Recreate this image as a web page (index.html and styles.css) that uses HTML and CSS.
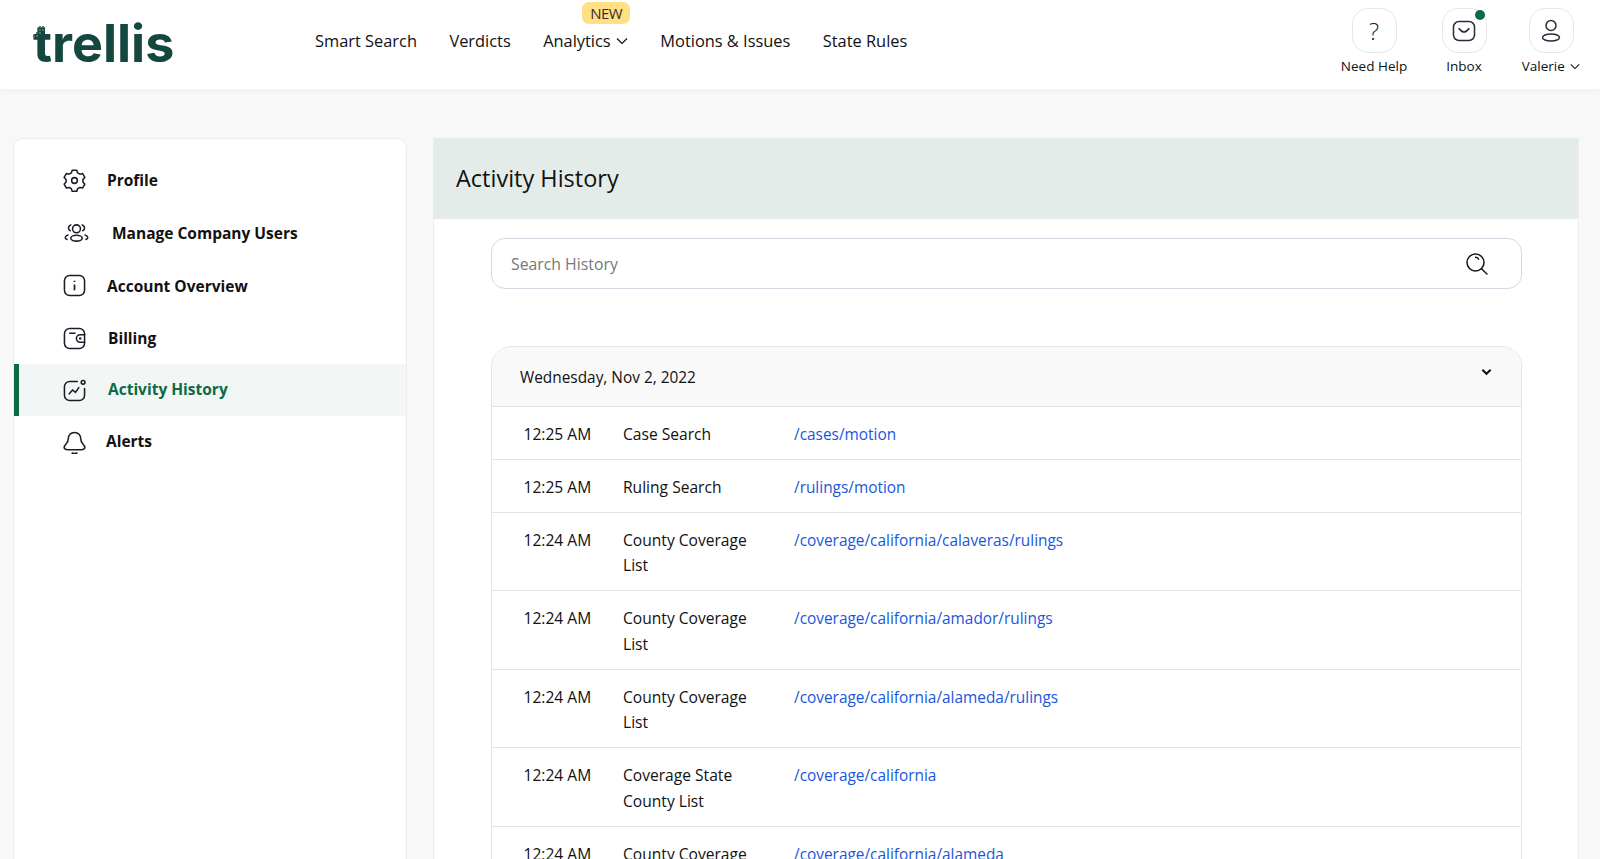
FILE: index.html
```html
<!DOCTYPE html>
<html lang="en">
<head>
<meta charset="utf-8">
<title>Activity History</title>
<link rel="stylesheet" href="styles.css">
</head>
<body>
<header class="topbar">
  <a class="logo"><svg class="logo-mark" viewBox="0 0 12 14" width="12" height="14"><g fill="#4d6f69"><rect x="6" y="0" width="2" height="2"/><rect x="9" y="0" width="2" height="2"/><rect x="6" y="3" width="2" height="2"/><rect x="9" y="3" width="2" height="2"/><rect x="3" y="6" width="2" height="2"/><rect x="6" y="6" width="2" height="2"/><rect x="0" y="9" width="2" height="2"/><rect x="3" y="9" width="2" height="2"/></g></svg>trellis</a>
  <nav class="mainnav">
    <a class="navlink">Smart Search</a>
    <a class="navlink">Verdicts</a>
    <a class="navlink has-badge"><span class="badge">NEW</span>Analytics <svg class="chev" viewBox="0 0 12 8" width="12" height="8"><path d="M1 1.500l5 5 5-5" fill="none" stroke="#111" stroke-width="1.200"/></svg></a>
    <a class="navlink">Motions &amp; Issues</a>
    <a class="navlink">State Rules</a>
  </nav>
  <div class="tools">
    <a class="tool tool-help">
      <span class="toolbox"><span class="qmark">?</span></span>
      <span class="toollabel">Need Help</span>
    </a>
    <a class="tool tool-inbox">
      <span class="toolbox"><i class="dot"></i><svg viewBox="0 0 24 24" width="24" height="24" fill="none" stroke="#2b2b3a" stroke-width="1.500"><rect x="1.500" y="2.500" width="21" height="19" rx="5.500"/><path d="M7 9.500c2 2.600 3.500 3.600 5 3.600s3-1 5-3.600" stroke-linecap="round"/></svg></span>
      <span class="toollabel">Inbox</span>
    </a>
    <a class="tool tool-user">
      <span class="toolbox"><svg viewBox="0 0 24 24" width="24" height="24" fill="none" stroke="#2b2b3a" stroke-width="1.500"><circle cx="12" cy="6.500" r="5"/><ellipse cx="12" cy="18.500" rx="8.500" ry="3.500"/></svg></span>
      <span class="toollabel">Valerie <svg class="chev chev-small" viewBox="0 0 12 8" width="10" height="7"><path d="M1 1.500l5 5 5-5" fill="none" stroke="#111" stroke-width="1.300"/></svg></span>
    </a>
  </div>
</header>

<div class="page">
  <aside class="sidebar">
    <a class="sideitem">
      <svg class="sideicon" viewBox="0 0 24 24" fill="none" stroke="#1c1c28" stroke-width="1.600" stroke-linejoin="round"><circle cx="12" cy="12" r="3"/><path d="M9.600 1.800h4.800l.9 2.800 2.300 1.300 2.900-.6 2.300 4-2 2.200v2.600l2 2.200-2.300 4-2.900-.6-2.300 1.300-.9 2.800H9.600l-.9-2.800-2.300-1.300-2.900.6-2.300-4 2-2.200v-2.600l-2-2.200 2.300-4 2.900.6 2.300-1.300z" transform="translate(0 -.5)"/></svg>
      <span class="sidetext t-profile">Profile</span>
    </a>
    <a class="sideitem">
      <svg class="sideicon icon-users" viewBox="0 0 24 24" fill="none" stroke="#1c1c28" stroke-width="1.500" stroke-linecap="round"><circle cx="12" cy="8.500" r="3.800"/><ellipse cx="12" cy="17.500" rx="5.500" ry="2.800"/><path d="M6.500 4.700a3 3 0 0 0-.5 5.600M17.500 4.700a3 3 0 0 1 .5 5.600M3.800 14.500c-1.600.6-2.600 1.500-2.600 2.300 0 .8.600 1.400 1.700 1.900M20.200 14.500c1.600.6 2.600 1.500 2.600 2.300 0 .8-.6 1.400-1.700 1.900"/></svg>
      <span class="sidetext t-users">Manage Company Users</span>
    </a>
    <a class="sideitem">
      <svg class="sideicon" viewBox="0 0 24 24" fill="none" stroke="#1c1c28" stroke-width="1.600"><rect x="1.500" y="1.500" width="21" height="21" rx="5.500"/><path d="M12 11v6" stroke-width="1.800"/><path d="M12 7v1.400" stroke-width="1.800"/></svg>
      <span class="sidetext t-account">Account Overview</span>
    </a>
    <a class="sideitem">
      <svg class="sideicon" viewBox="0 0 24 24" fill="none" stroke="#1c1c28" stroke-width="1.600" stroke-linecap="round"><path d="M22.500 8V7a5.500 5.500 0 0 0-5.500-5.500H7A5.500 5.500 0 0 0 1.500 7v10A5.500 5.500 0 0 0 7 22.500h10a5.500 5.500 0 0 0 5.500-5.500v-1"/><path d="M22.500 8h-4.500a4 4 0 0 0 0 8h4.500z"/><path d="M7 6.500h5.500"/><circle cx="18" cy="12" r=".6"/></svg>
      <span class="sidetext t-billing">Billing</span>
    </a>
    <a class="sideitem is-active">
      <svg class="sideicon" viewBox="0 0 24 24" fill="none" stroke="#1c1c28" stroke-width="1.600" stroke-linecap="round"><path d="M15 2.500H7A5.500 5.500 0 0 0 1.500 8v9A5.500 5.500 0 0 0 7 22.500h10a5.500 5.500 0 0 0 5.500-5.500v-7"/><circle cx="21" cy="3.500" r="2"/><path d="M6.500 15.500l3.500-4 3 2.500 3.500-5"/></svg>
      <span class="sidetext t-activity">Activity History</span>
    </a>
    <a class="sideitem">
      <svg class="sideicon" viewBox="0 0 24 24" fill="none" stroke="#1c1c28" stroke-width="1.600" stroke-linecap="round"><path d="M12 1.500c-4 0-6.500 3-6.500 6.500 0 2.500-.7 3.800-2.300 5.500-1.200 1.300-2 2.300-2 3.500 0 1.600 1.800 2.500 3.800 2.500h14c2 0 3.800-.9 3.800-2.500 0-1.200-.8-2.200-2-3.500-1.600-1.700-2.300-3-2.300-5.500 0-3.500-2.500-6.500-6.500-6.500z"/><path d="M9.500 23c1.600.7 3.400.7 5 0"/></svg>
      <span class="sidetext t-alerts">Alerts</span>
    </a>
  </aside>

  <main class="panel">
    <h1 class="panel-title">Activity History</h1>
    <div class="panel-body">
      <div class="searchbox">
        <span class="placeholder">Search History</span>
        <svg class="searchicon" viewBox="0 0 22 22" width="22" height="22" fill="none" stroke="#15151f" stroke-width="1.500" stroke-linecap="round"><circle cx="9.500" cy="9.500" r="8.500"/><path d="M15.500 15.800l5.500 5.200"/><path d="M9.500 4.300c1.300 0 2.500.7 3.100 1.800"/></svg>
      </div>
      <section class="daygroup">
        <div class="dayhead">
          <span class="daytext">Wednesday, Nov 2, 2022</span>
          <svg class="daychev" viewBox="0 0 12 8" width="11" height="8"><path d="M1.500 1.500L6 6l4.500-4.500" fill="none" stroke="#111" stroke-width="2.200"/></svg>
        </div>
        <div class="row"><span>12:25 AM</span><span class="kind">Case Search</span><a class="path">/cases/motion</a></div>
        <div class="row"><span>12:25 AM</span><span class="kind">Ruling Search</span><a class="path">/rulings/motion</a></div>
        <div class="row"><span>12:24 AM</span><span class="kind">County Coverage List</span><a class="path">/coverage/california/calaveras/rulings</a></div>
        <div class="row"><span>12:24 AM</span><span class="kind">County Coverage List</span><a class="path">/coverage/california/amador/rulings</a></div>
        <div class="row"><span>12:24 AM</span><span class="kind">County Coverage List</span><a class="path">/coverage/california/alameda/rulings</a></div>
        <div class="row"><span>12:24 AM</span><span class="kind">Coverage State County List</span><a class="path">/coverage/california</a></div>
        <div class="row"><span>12:24 AM</span><span class="kind">County Coverage List</span><a class="path">/coverage/california/alameda</a></div>
      </section>
    </div>
  </main>
</div>
</body>
</html>
```
FILE: styles.css
```css
* { box-sizing: border-box; }
html, body { margin: 0; height: 100%; overflow: hidden; }
body {
  background: #f8f8f8;
  color: #111;
  font-family: "Open Sans", "Liberation Sans", sans-serif;
  font-size: 16px;
}
a { color: inherit; text-decoration: none; }

.topbar {
  height: 89px;
  background: #fff;
  display: flex;
  align-items: flex-start;
  box-shadow: 0 2px 6px rgba(0,0,0,.04);
  padding-left: 33px;
}
.logo {
  position: relative;
  width: 282px;
  margin-top: 10px;
  font-family: Inter, "Liberation Sans", sans-serif;
  font-weight: 700;
  font-size: 52px;
  line-height: 67px;
  letter-spacing: 0;
  color: #13473f;
}
.logo-mark { position: absolute; left: 0; top: 16px; }
.mainnav { display: flex; gap: 32.400px; margin-top: 28px; }
.navlink { position: relative; font-size: 16.400px; font-weight: 500; line-height: 26px; white-space: nowrap; }
.chev { margin-left: 1px; vertical-align: 2px; }
.chev-small { margin-left: 2px; vertical-align: 1px; }
.badge {
  position: absolute;
  left: 39px;
  top: -26px;
  width: 48px;
  height: 22px;
  background: #ffe083;
  border-radius: 7px;
  font-size: 15px;
  font-weight: 400;
  line-height: 22px;
  text-align: center;
  letter-spacing: -.5px;
  color: #3b2a2a;
}
.badge::after {
  content: "";
  position: absolute;
  left: 9px;
  bottom: -4px;
  width: 9px;
  height: 9px;
  background: #ffe083;
  transform: rotate(45deg);
  z-index: -1;
}
.tools { margin-left: auto; display: flex; padding-top: 8px; padding-right: 11px; }
.tool { display: flex; flex-direction: column; align-items: center; width: 98px; }
.tool-help { width: 82px; }
.tool-user { width: 76px; }
.toolbox {
  position: relative;
  width: 45px;
  height: 45px;
  border: 1px solid #e6e6e6;
  border-radius: 16px;
  display: flex;
  align-items: center;
  justify-content: center;
  background: #fff;
}
.qmark { font-size: 24px; font-weight: 300; color: #222; line-height: 1; }
.dot {
  position: absolute;
  right: 1px;
  top: 1px;
  width: 10px;
  height: 10px;
  border-radius: 50%;
  background: #0b6b45;
}
.toollabel { margin-top: 3px; font-size: 13.500px; font-weight: 500; line-height: 20px; white-space: nowrap; }

.page {
  display: flex;
  gap: 26px;
  padding: 49px 21px 0 13px;
  height: 770px;
}
.sidebar {
  width: 394px;
  flex: none;
  height: 800px;
  background: #fff;
  border: 1px solid #ececec;
  border-radius: 10px;
  padding-top: 15px;
}
.sideitem {
  height: 52px;
  padding-left: 49px;
  display: flex;
  align-items: center;
  font-size: 15.500px;
  font-weight: 700;
}
.sideitem:nth-child(2) { height: 53px; }
.sideitem:nth-child(3) { height: 53.500px; }
.sideitem:nth-child(4) { height: 51.500px; }
.sideicon { width: 23px; height: 23px; flex: none; }
.icon-users { width: 25px; height: 25px; margin-left: 1px; margin-right: -3px; }
.sidetext { line-height: 24px; margin-bottom: 1px; }
.t-profile { margin-left: 21px; }
.t-users { margin-left: 26px; margin-bottom: 0; }
.t-account { margin-left: 21px; margin-bottom: 0; }
.t-billing { margin-left: 22px; }
.t-activity { margin-left: 22px; margin-bottom: 3px; }
.t-alerts { margin-left: 20px; margin-bottom: 3px; }
.is-active {
  background: #f2f6f4;
  color: #0b6b45;
  border-left: 5px solid #0b6b45;
  padding-left: 44px;
}

.panel {
  flex: 1;
  height: 800px;
  background: #fff;
  border: 1px solid #ececec;
  border-top: 0;
}
.panel-title {
  margin: 0;
  height: 81px;
  padding-left: 22px;
  background: #e4ecea;
  font-size: 23.500px;
  font-weight: 500;
  line-height: 81px;
}
.panel-body { padding: 19px 56px 0 57px; }
.searchbox {
  height: 51px;
  border: 1px solid #d3d9e2;
  border-radius: 14px;
  display: flex;
  align-items: center;
  justify-content: space-between;
  padding: 0 33px 0 19px;
}
.placeholder { color: #777; font-size: 15.800px; }
.daygroup {
  margin-top: 57px;
  border: 1px solid #e4e4e4;
  border-radius: 20px 20px 0 0;
  overflow: hidden;
}
.dayhead {
  height: 59px;
  background: #f9f9f9;
  display: flex;
  justify-content: space-between;
  align-items: center;
  padding: 2px 29px 0 28px;
}
.daytext { font-size: 15.400px; }
.daychev { margin-top: -12px; }
.row {
  display: grid;
  grid-template-columns: 99.500px 171px 1fr;
  padding: 14.900px 32px 11.600px 31.500px;
  border-top: 1px solid #e4e4e4;
  font-size: 15.600px;
  line-height: 25.500px;
}
.kind { padding-right: 36px; }
.path { color: #1a56db; font-size: 15.400px; }
```
